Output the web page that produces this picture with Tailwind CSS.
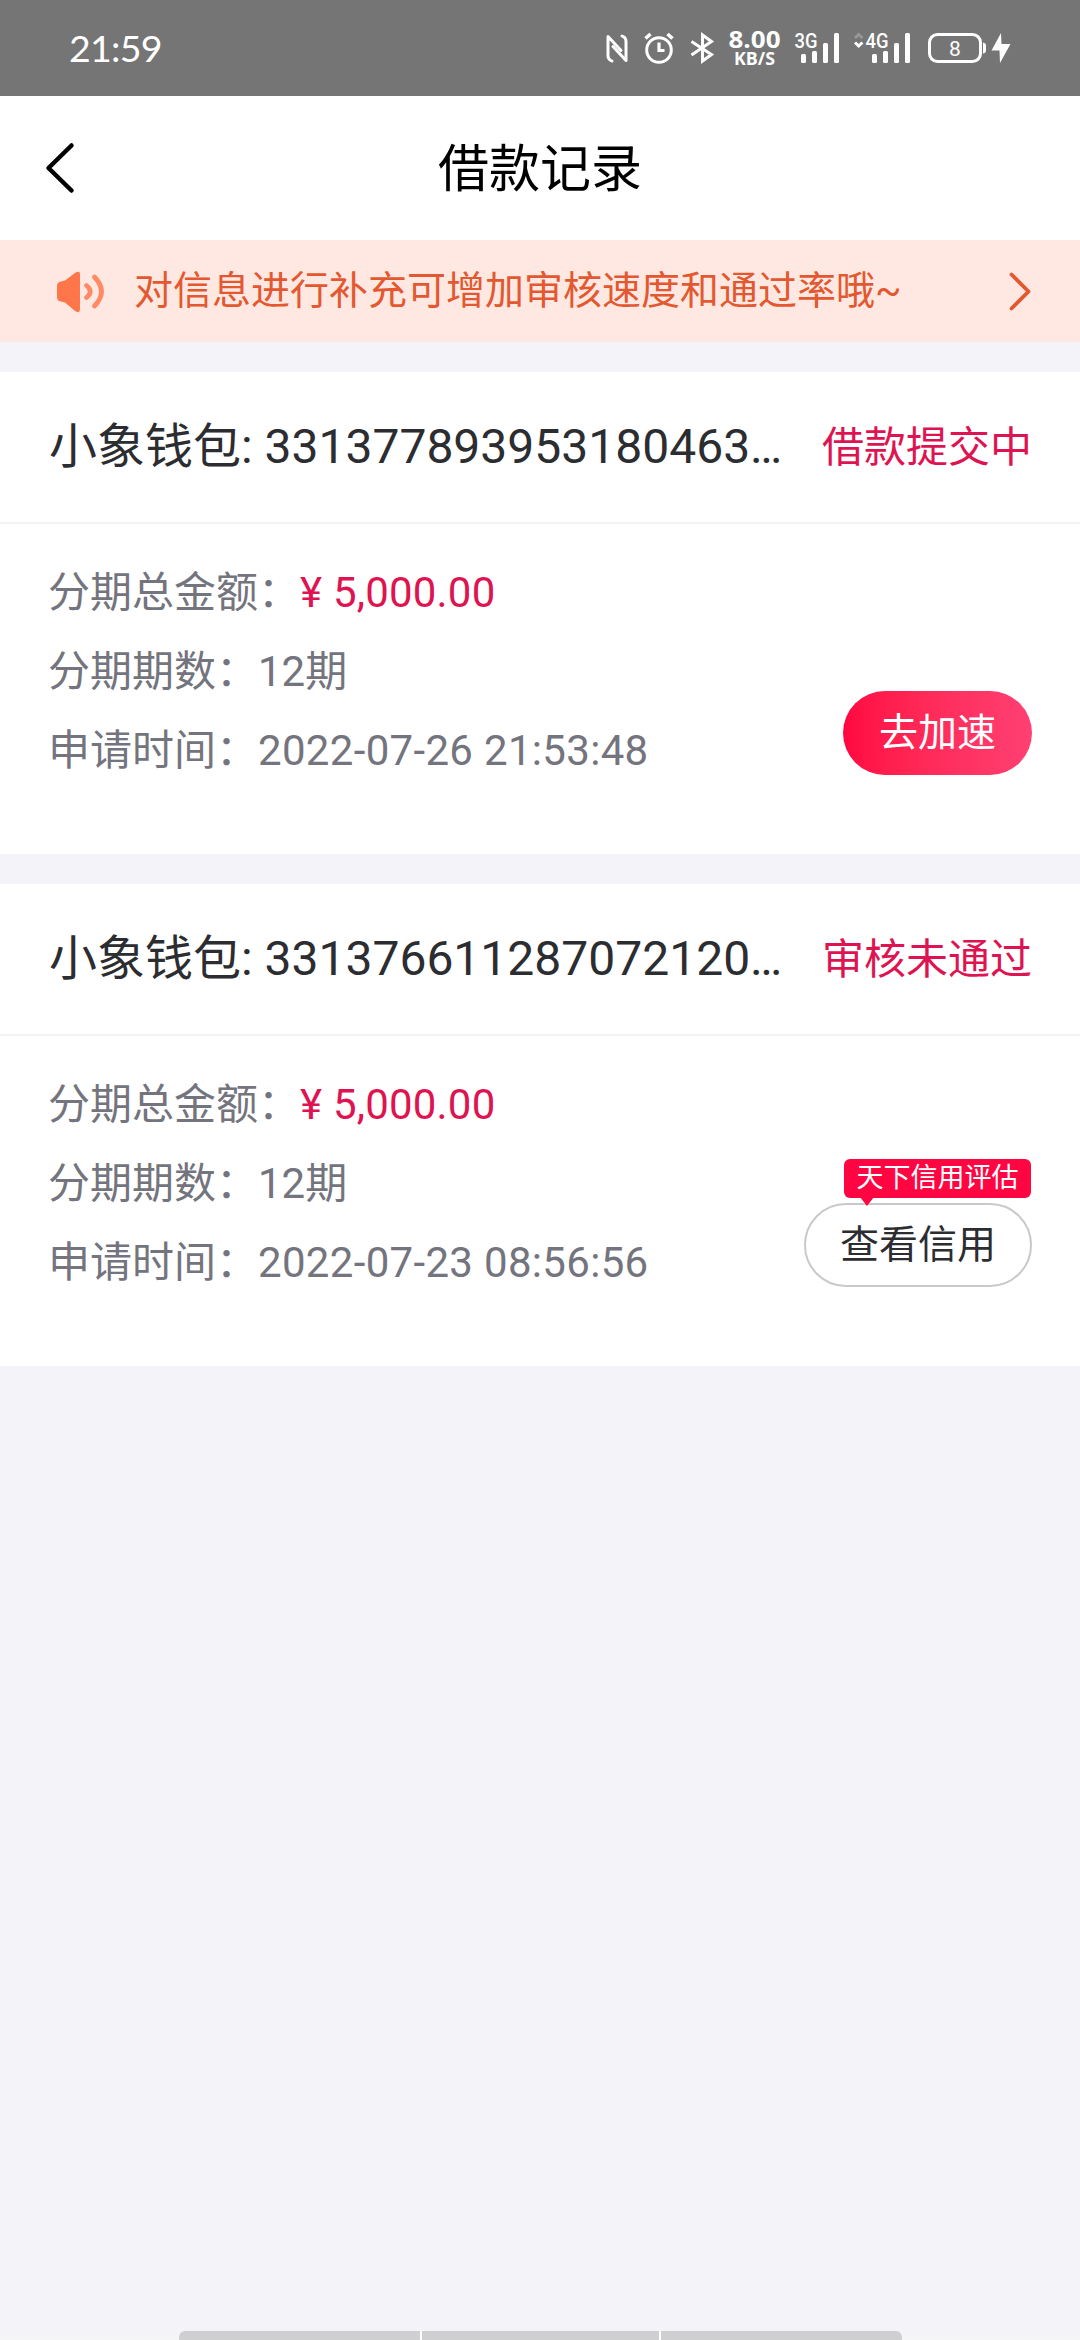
<!DOCTYPE html>
<html lang="zh-CN">
<head>
<meta charset="utf-8">
<title>借款记录</title>
<script src="https://cdn.jsdelivr.net/npm/@tailwindcss/browser@4"></script>
</head>
<body class="bg-[#f4f3fa]">
<div class="relative flex h-[2340px] w-[1080px] flex-col overflow-hidden bg-[#f4f3fa] font-['Roboto','Noto_Sans_CJK_SC',sans-serif] font-normal text-[#2c2d31]">

  <!-- Status bar -->
  <div class="flex h-24 shrink-0 items-center justify-between bg-[#757575] pl-[69px] pr-[66px] text-white">
    <span class="font-['Lato',sans-serif] text-[37.500px] leading-[94px] tracking-[-0.700px]">21:59</span>
    <div class="flex h-24">
      <!-- NFC -->
      <svg class="h-24 w-[40px]" viewBox="600 0 40 96" fill="none" stroke="#fff" stroke-width="3" stroke-linejoin="round" stroke-linecap="round"><path d="M612 61l-1.500-.8q-2.500-1.500-2.500-4.500V36.500L621 50.500"/><path d="M622 36l1.500.8q2.500 1.500 2.500 4.500V60.500L613 46.500"/></svg>
      <!-- Alarm -->
      <svg class="h-24 w-[45px]" viewBox="640 0 45 96" fill="none" stroke="#fff" stroke-width="3"><circle cx="659" cy="50" r="12.300"/><path d="M659 42.500v8h5.500" stroke-width="3.200"/><path d="M645.500 38.500l5-4.500M672.500 38.500l-5-4.500" stroke-width="3.600"/></svg>
      <!-- Bluetooth -->
      <svg class="h-24 w-[42px]" viewBox="685 0 42 96" fill="none" stroke="#fff" stroke-width="3"><path d="M691.500 41.500L711.500 54.500L702.500 61V35L711.500 41.500L691.500 55"/></svg>
      <!-- Network speed -->
      <svg class="h-24 w-[56px]" viewBox="727 0 56 96" fill="#fff" font-family="Open Sans" font-weight="700"><text x="728.500" y="47.500" font-size="23.500" textLength="52" lengthAdjust="spacingAndGlyphs">8.00</text><text x="734" y="65" font-size="17.500" textLength="41" lengthAdjust="spacingAndGlyphs">KB/S</text></svg>
      <!-- 3G signal -->
      <svg class="h-24 w-[65px]" viewBox="783 0 65 96" fill="#fff"><text x="794.500" y="47.500" font-family="Roboto" font-size="19.500" font-weight="500" textLength="23" lengthAdjust="spacingAndGlyphs">3G</text><rect x="801" y="54" width="5" height="9" rx="1.500"/><rect x="812" y="51" width="5" height="12" rx="1.500"/><rect x="823" y="43" width="5" height="20" rx="1.500"/><rect x="834" y="33" width="5" height="30" rx="1.500"/></svg>
      <!-- 4G signal -->
      <svg class="h-24 w-[76px]" viewBox="848 0 76 96" fill="#fff"><path d="M855 38l3.700-3.500l3.700 3.500" fill="none" stroke="#979797" stroke-width="3"/><path d="M855 42.500l3.700 3.500l3.700-3.500" fill="none" stroke="#fff" stroke-width="3"/><text x="865.500" y="47.500" font-family="Roboto" font-size="19.500" font-weight="500" textLength="23" lengthAdjust="spacingAndGlyphs">4G</text><rect x="872" y="54" width="5" height="9" rx="1.500"/><rect x="883" y="51" width="5" height="12" rx="1.500"/><rect x="894" y="43" width="5" height="20" rx="1.500"/><rect x="905" y="33" width="5" height="30" rx="1.500"/></svg>
      <!-- Battery -->
      <svg class="h-24 w-[90px]" viewBox="924 0 90 96" fill="#fff"><rect x="929.500" y="34.500" width="51" height="27" rx="8" fill="none" stroke="#fff" stroke-width="3"/><path d="M983 42.500q3 .5 3 3v5q0 2.500-3 3z"/><text x="955" y="55.500" text-anchor="middle" font-family="Roboto" font-size="21">8</text><path d="M1001 33L991.500 50.500H999.500L1000 63L1010.500 44H1001.500z"/></svg>
    </div>
  </div>

  <!-- Title bar -->
  <header class="grid h-36 shrink-0 grid-cols-[120px_1fr_120px] items-center bg-white text-black">
    <svg class="h-[60px] w-[120px]" viewBox="0 138 120 60" fill="none" stroke="#000" stroke-width="4.500" stroke-linecap="round" stroke-linejoin="round"><path d="M71.500 145.500L48.500 168L71.500 190.500"/></svg>
    <h1 class="pt-[3px] text-center text-[51px] leading-[141px]">借款记录</h1>
  </header>

  <!-- Notice -->
  <div class="flex h-[102px] shrink-0 items-center bg-[#fee8e1] text-[#e35830]">
    <svg class="h-[102px] w-[134px]" viewBox="0 240 134 102"><path d="M57 286q0-4 4-4.500l4-1L75 273q5-3 5 1v35q0 5-5 2L65 302.500l-4-1q-4-.5-4-4.500z" fill="#ff764b"/><path d="M86.500 285.500q7.500 6 0 12M94.500 277q14 14.500 0 29" fill="none" stroke="#ff8a63" stroke-width="4.800" stroke-linecap="round"/></svg>
    <p class="flex-1 pt-px text-[39px] leading-[101px]">对信息进行补充可增加审核速度和通过率哦~</p>
    <svg class="h-[102px] w-[80px]" viewBox="1000 240 80 102" fill="none" stroke="#e35830" stroke-width="3.800" stroke-linecap="round" stroke-linejoin="round"><path d="M1011.500 274.500L1028.500 291.500L1011.500 308.500"/></svg>
  </div>

  <main class="mt-[30px] flex flex-col gap-[30px]">
    <!-- Record 1 -->
    <section class="flex h-[482px] flex-col bg-white">
      <div class="flex h-[152px] items-center justify-between border-b-2 border-[#f3f3f5] pl-[49px] pr-[48px]">
        <h2 class="text-[48px] leading-[72px]">小象钱包: 331377893953180463…</h2>
        <span class="pt-[2px] text-[42px] leading-[72px] text-[#de1452]">借款提交中</span>
      </div>
      <div class="flex flex-1 items-end justify-between pl-[48px] pr-[48px] pb-[79px]">
        <div class="mb-[-15px] flex flex-col self-end text-[42px] leading-[79px] text-[#74747e]">
          <p>分期总金额：<span class="tracking-[0.200px] text-[#de1452]">¥ 5,000.00</span></p>
          <p>分期期数：12期</p>
          <p>申请时间：<span class="tracking-[0.320px]">2022-07-26 21:53:48</span></p>
        </div>
        <button class="h-[84px] w-[189px] rounded-full bg-linear-to-r from-[#ff0540] to-[#ff3f73] pt-px text-[39px] text-white">去加速</button>
      </div>
    </section>

    <!-- Record 2 -->
    <section class="flex h-[482px] flex-col bg-white">
      <div class="flex h-[152px] items-center justify-between border-b-2 border-[#f3f3f5] pl-[49px] pr-[48px]">
        <h2 class="text-[48px] leading-[72px]">小象钱包: 331376611287072120…</h2>
        <span class="pt-[2px] text-[42px] leading-[72px] text-[#de1452]">审核未通过</span>
      </div>
      <div class="flex flex-1 items-end justify-between pl-[48px] pr-[48px] pb-[79px]">
        <div class="mb-[-15px] flex flex-col self-end text-[42px] leading-[79px] text-[#74747e]">
          <p>分期总金额：<span class="tracking-[0.200px] text-[#de1452]">¥ 5,000.00</span></p>
          <p>分期期数：12期</p>
          <p>申请时间：<span class="tracking-[0.320px]">2022-07-23 08:56:56</span></p>
        </div>
        <div class="relative">
          <button class="h-[84px] w-[228px] rounded-full border-2 border-[#c9c9c9] bg-white text-[39px]">查看信用</button>
          <div class="absolute right-[1px] top-[-44px] h-[39px] w-[187px] rounded-[6px] bg-[#ff0542] text-center text-[27px] leading-[39px] text-white">天下信用评估
            <svg class="absolute left-[16px] top-[38px] h-[9px] w-[14px]" viewBox="0 0 14 9" fill="#ff0542"><path d="M0 0H14L7 9z"/></svg>
          </div>
        </div>
      </div>
    </section>
  </main>

  <!-- Bottom gesture strip -->
  <div class="mt-auto flex h-[20px] items-end justify-center bg-linear-to-b from-[#f4f3fa] to-[#f5f5f7]">
    <div class="flex h-[9px] w-[723px] gap-[2px] overflow-hidden rounded-t-[6px] bg-white">
      <div class="w-[241px] bg-[#cfcfd1]"></div>
      <div class="w-[237px] bg-[#cfcfd1]"></div>
      <div class="w-[241px] bg-[#cfcfd1]"></div>
    </div>
  </div>
</div>
</body>
</html>
